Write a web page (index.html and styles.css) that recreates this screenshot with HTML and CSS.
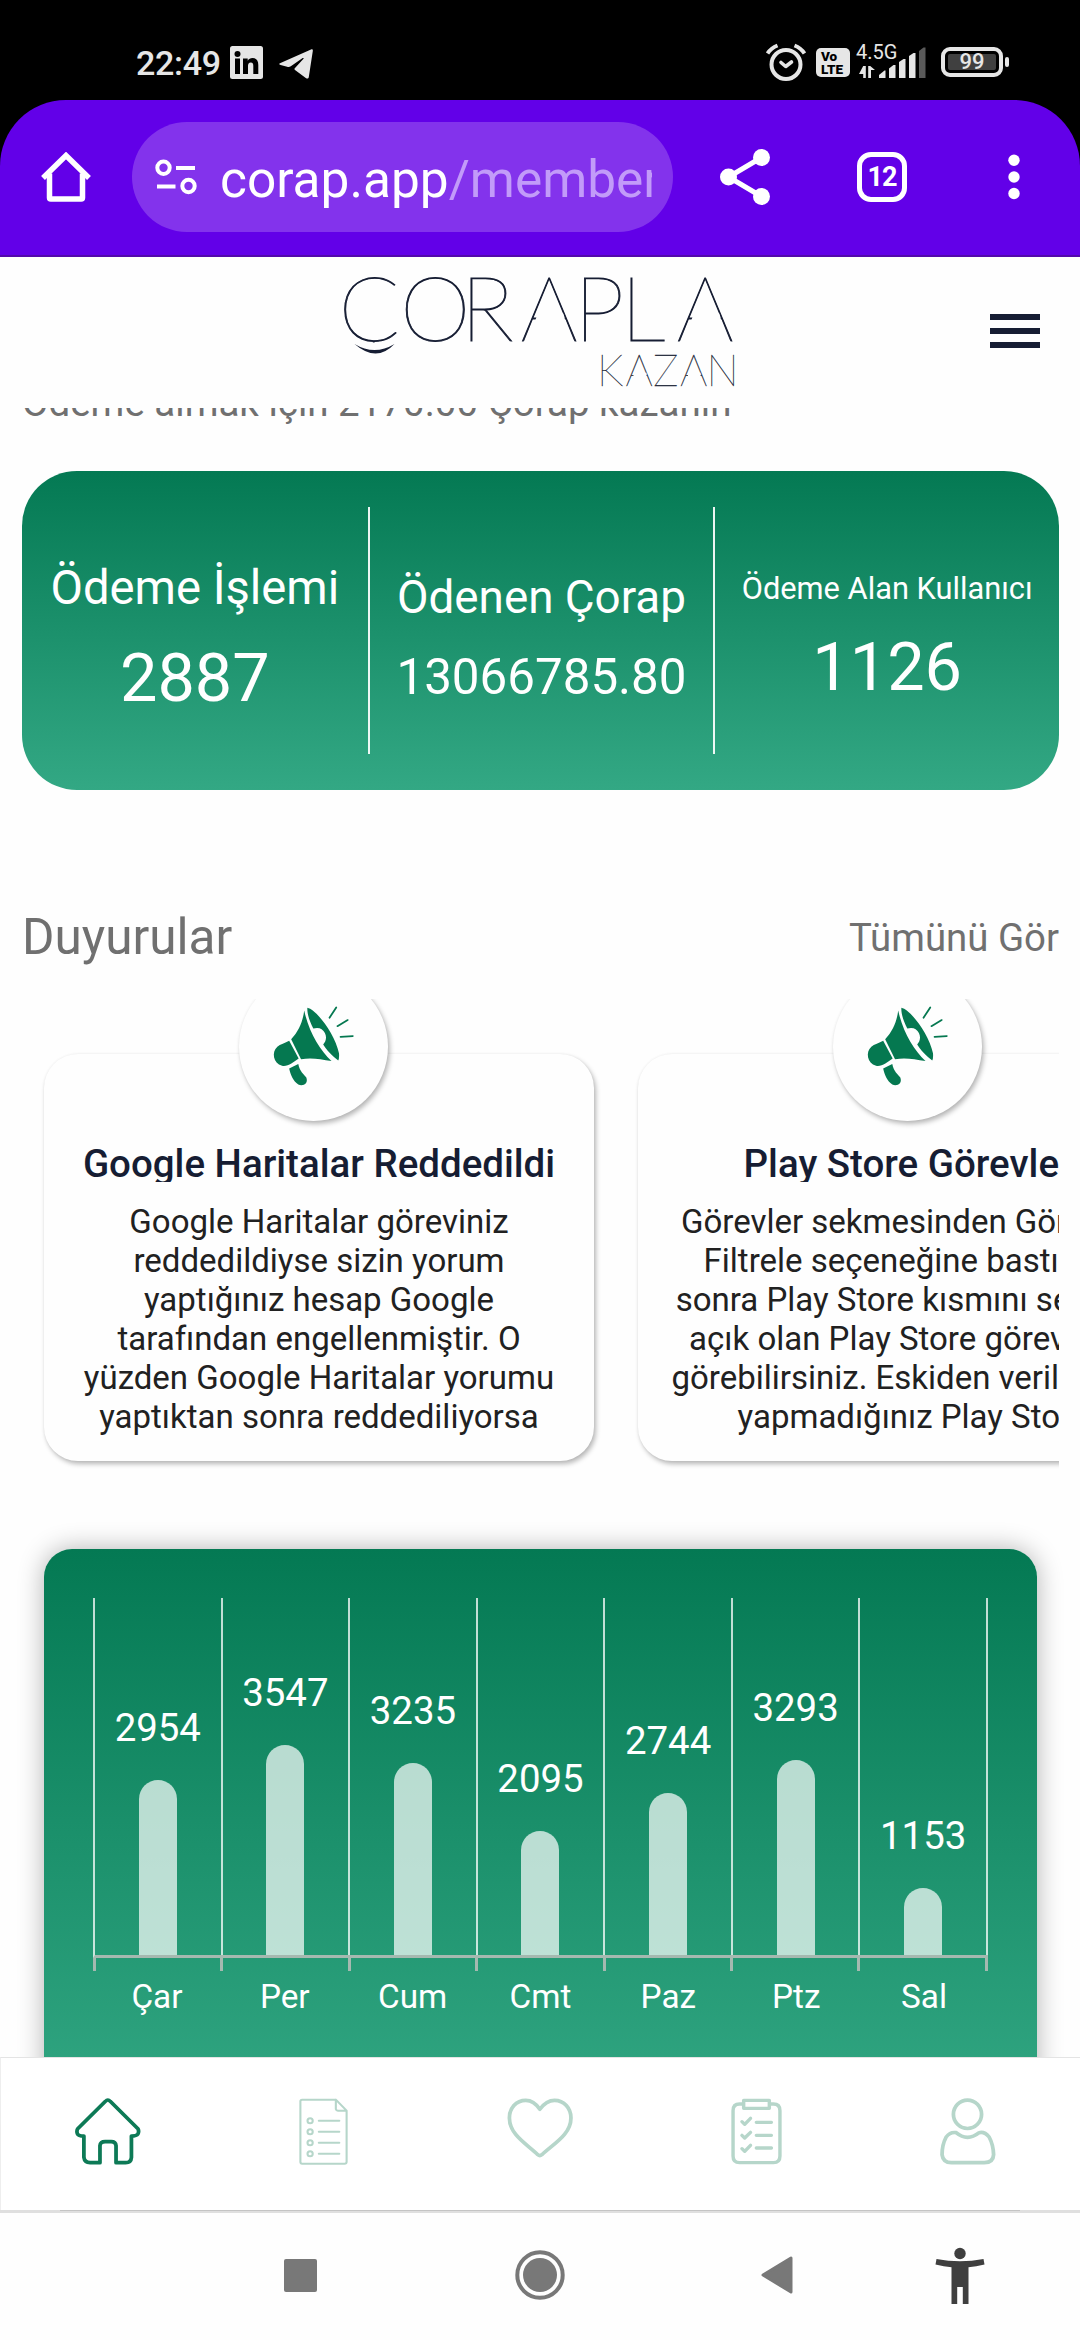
FILE: index.html
```html
<!DOCTYPE html>
<html lang="tr">
<head>
<meta charset="utf-8">
<title>Çorapla Kazan</title>
<link rel="stylesheet" href="styles.css">
</head>
<body>
<div class="phone">
  <div class="status">
    <span class="clock">22:49</span>
    <svg class="s-linkedin" width="33" height="33" viewBox="0 0 33 33"><rect width="33" height="33" rx="2.500" fill="#e6e6e6"/><g fill="#000"><circle cx="7.500" cy="8" r="3"/><rect x="5" y="12.500" width="5" height="15.500"/><path d="M13 12.500h4.700v2.200c1-1.700 2.700-2.600 4.800-2.600 4.200 0 5.800 2.500 5.800 7V28h-5v-8c0-2.200-.5-3.600-2.500-3.600-2.100 0-2.800 1.500-2.800 3.600v8H13z"/></g></svg>
    <svg class="s-telegram" width="34" height="30" viewBox="0 0 34 30"><path fill="#e6e6e6" d="M1.500 14 32 .4c1.300-.5 2 .2 1.800 1.500L29.800 28c-.3 1.600-1.400 2-2.700 1.200L16 21c-.8-.7-.7-1.400 0-2.100l8.500-9.200c.4-.6-.2-1-.8-.6L11.800 17.300c-1.200.8-2.300.9-3.700.5L1.600 16C-.3 15.400-.2 14.800 1.500 14z"/></svg>
    <div class="status-right">
      <svg class="s-alarm" width="40" height="38" viewBox="0 0 40 38"><g fill="none" stroke="#e6e6e6" stroke-linecap="round"><circle cx="20" cy="21.500" r="14.500" stroke-width="4"/><path stroke-width="3.600" stroke-linejoin="round" d="M15 19.500l4.700 4 5.800-4.500"/><path stroke-width="4" stroke-linecap="butt" d="M1.500 10.500 Q5 5 11.500 2.500M38.500 10.500 Q35 5 28.500 2.500"/></g></svg>
      <div class="volte"><span>Vo</span><span>LTE</span></div>
      <div class="net"><span>4.5G</span>
        <svg width="16" height="12" viewBox="0 0 16 12"><g fill="#e6e6e6"><path d="M4.200 0h2.600v12H4.200V8H0z"/><path d="M9.200 12H12V4h4L11.200 0h-2z"/></g></svg>
      </div>
      <svg class="s-signal" width="50" height="32" viewBox="0 0 50 32"><g fill="#e6e6e6"><path d="M1 28l5.500-4.500h1V31H1z"/><path d="M11 21.500l4.500-3.500h2v13H11z"/><path d="M21 15l4.500-3h2v19H21z"/><path d="M31 9l4.500-3h2v25H31z"/><path fill="#5a5a5a" d="M41 4l4.500-3.500h2V31H41z"/></g></svg>
      <div class="battery"><span>99</span></div><i class="nub"></i>
    </div>
  </div>

  <div class="toolbar-wrap"><div class="toolbar">
    <svg class="t-home" width="50" height="50" viewBox="0 0 50 50"><path fill="none" stroke="#fff" stroke-width="5.500" stroke-linejoin="round" d="M8.500 21.500v24.200q0 1.300 1.300 1.300h30.400q1.300 0 1.300-1.300V21.500"/><path fill="none" stroke="#fff" stroke-width="5.500" d="M2 26 25 3.500 48 26"/></svg>
    <div class="url">
      <svg width="42" height="36" viewBox="0 0 42 36"><g fill="none" stroke="#fff" stroke-width="4"><circle cx="8.500" cy="8.800" r="6.200"/><path d="M21 9h19M2 27.500h18.500"/><circle cx="33.500" cy="27" r="6.200"/></g></svg>
      <div class="address">corap.app<span>/member</span></div>
    </div>
    <svg class="t-share" width="50" height="56" viewBox="0 0 50 56"><path fill="none" stroke="#fff" stroke-width="5" d="M41.500 8.500 8.500 28l33 19.500"/><g fill="#fff"><circle cx="8.500" cy="28" r="8.500"/><circle cx="41.500" cy="8.500" r="8.500"/><circle cx="41.500" cy="47.500" r="8.500"/></g></svg>
    <div class="tabs">12</div>
    <svg class="t-dots" width="12" height="46" viewBox="0 0 12 46"><g fill="#fff"><circle cx="6" cy="6.300" r="5.700"/><circle cx="6" cy="23" r="5.700"/><circle cx="6" cy="39.500" r="5.700"/></g></svg>
  </div></div>

  <header class="site-head">
    <svg class="logo" width="400" height="116" viewBox="340 272 400 116" role="img">
      <g class="logo-main"><text y="340.500" x="338.500 400 460.500 520.500 574 620.500 676.500">ÇORAPLA</text></g>
      <rect x="340" y="342.500" width="60" height="24" fill="#fefefe"/>
      <path fill="#fefefe" d="M538 313H563L565.500 321H535zM694 313H719L721.500 321H691z"/>
      <path fill="#161d33" d="M354.500 344q20 12 40 0q-18 19-40 0z"/>
      <g class="logo-sub"><text y="385.500" x="597 625.500 653 680 706.500">KAZAN</text></g>
      <g stroke="#fefefe" stroke-width="4.500"><path d="M633.500 375h13M688 375h12.500"/></g>
    </svg>
    <div class="burger"><i></i><i></i><i></i></div>
  </header>

  <main class="content">
    <div class="notice"><p>Ödeme almak için 2170.00 Çorap kazanın</p></div>
    <section class="stats">
      <div class="stat stat-a"><span>Ödeme İşlemi</span><b>2887</b></div>
      <div class="stat stat-b"><span>Ödenen Çorap</span><b>13066785.80</b></div>
      <div class="stat stat-c"><span>Ödeme Alan Kullanıcı</span><b>1126</b></div>
    </section>

    <div class="section-head"><h2>Duyurular</h2><a>Tümünü Gör</a></div>

    <svg width="0" height="0" class="defs"><symbol id="mega" viewBox="685 325 215 220" preserveAspectRatio="none">
      <path fill="#057850" d="M769 342C766 368 756 396 736 417L761 470C786 464 810 470 838 474C808 446 780 396 769 342z"/>
      <path fill="#057850" d="M777 335C800 340 846 402 857 454Q858 468 855 473C846 464 832 456 817 431C828 420 826 400 813 391Q806 386 792 389C782 369 776 350 777 335z"/>
      <path fill="#057850" d="M731 421L755 468C742 478 727 490 713 487C690 481 686 450 701 437C708 430 721 427 731 421z"/>
      <path fill="#057850" d="M731 494Q744 487 754 482C758 503 768 508 774 517C781 534 765 542 754 536C741 527 734 509 731 494z"/>
      <path fill="none" stroke="#057850" stroke-width="4.500" stroke-linecap="round" d="M833 361L850 334M853 383L879 367M861 411L892 409"/>
    </symbol></svg>

    <section class="carousel">
      <article class="news">
        <div class="badge"><svg width="85" height="84"><use href="#mega"/></svg></div>
        <h3>Google Haritalar Reddedildi</h3>
        <p>Google Haritalar göreviniz<br>reddedildiyse sizin yorum<br>yaptığınız hesap Google<br>tarafından engellenmiştir. O<br>yüzden Google Haritalar yorumu<br>yaptıktan sonra reddediliyorsa</p>
      </article>
      <article class="news">
        <div class="badge"><svg width="85" height="84"><use href="#mega"/></svg></div>
        <h3>Play Store Görevleri</h3>
        <p>Görevler sekmesinden Görevleri<br>Filtrele seçeneğine bastıktan<br>sonra Play Store kısmını seçerek<br>açık olan Play Store görevlerini<br>görebilirsiniz. Eskiden verilmiş ve<br>yapmadığınız Play Store</p>
      </article>
    </section>

    <section class="chart-card">
      <div class="plot">
        <div class="col"><span>2954</span><i style="height:175px"></i></div>
        <div class="col"><span>3547</span><i style="height:210px"></i></div>
        <div class="col"><span>3235</span><i style="height:192px"></i></div>
        <div class="col"><span>2095</span><i style="height:124px"></i></div>
        <div class="col"><span>2744</span><i style="height:162px"></i></div>
        <div class="col"><span>3293</span><i style="height:195px"></i></div>
        <div class="col"><span>1153</span><i style="height:67px"></i></div>
      </div>
      <div class="days"><span>Çar</span><span>Per</span><span>Cum</span><span>Cmt</span><span>Paz</span><span>Ptz</span><span>Sal</span></div>
    </section>
  </main>

  <nav class="tabbar">
    <svg width="66" height="67" viewBox="218 172 193 201" preserveAspectRatio="none"><path fill="none" stroke="#0d7a56" stroke-width="11" stroke-linejoin="round" d="M307 182Q314 174 321 182L402 264Q406 272 402 280Q398 286 383 286V350Q382 366 366 366H338V315Q337 303 324 303H306Q292 303 291 315V366H262Q246 366 244 350V286Q228 286 225 279Q222 271 226 264z"/></svg>
    <svg width="49" height="67" viewBox="871 172 141 201" preserveAspectRatio="none"><g fill="none" stroke="#b6d6ca" stroke-width="6" stroke-linejoin="round"><path d="M977 177H880Q875 177 875 182V363Q875 369 880 369H1002Q1008 369 1008 363V210L977 177V205Q978 210 983 210H1008"/><path stroke-linecap="round" d="M928 240H987M928 273H987M928 306H987M928 339H987"/><circle cx="903" cy="240" r="7.500"/><circle cx="903" cy="273" r="7.500"/><circle cx="903" cy="306" r="7.500"/><circle cx="903" cy="339" r="7.500"/></g></svg>
    <svg width="66" height="60" viewBox="1472 172 193 181" preserveAspectRatio="none"><path fill="none" stroke="#b6d6ca" stroke-width="11" stroke-linejoin="round" d="M1568 206C1557 189 1543 179 1527 179C1498 179 1479 203 1479 232C1479 283 1530 311 1562 343Q1568 348 1574 343C1606 311 1659 283 1659 232C1659 203 1639 179 1611 179C1594 179 1580 189 1568 206z"/></svg>
    <svg width="51" height="67" viewBox="555 172 149 201" preserveAspectRatio="none"><g fill="none" stroke="#b6d6ca" stroke-width="10" stroke-linejoin="round"><path d="M592 190H580Q561 190 561 210V346Q561 366 580 366H679Q698 366 698 346V210Q698 190 679 190H667"/><path d="M592 179H667V203H592z"/><g stroke-linecap="round"><path d="M629 245H673M629 284H673M629 322H673"/><path d="M587 243L595 251L612 233M587 284L595 292L612 275M587 324L595 332L612 314"/></g></g></svg>
    <svg width="56" height="67" viewBox="1160 172 163 201" preserveAspectRatio="none"><g fill="none" stroke="#b6d6ca" stroke-width="11" stroke-linejoin="round"><ellipse cx="1240" cy="221" rx="41" ry="42.500"/><path d="M1207 276Q1223 290 1240 290Q1257 290 1274 276Q1290 272 1303 289Q1315 312 1316 342Q1315 366 1289 366H1193Q1169 366 1166 342Q1166 312 1178 289Q1190 273 1207 276z"/></g></svg>
  </nav>
  <div class="sysline"></div>
  <div class="sysnav">
    <i class="recent"></i>
    <svg class="circle" width="50" height="50" viewBox="0 0 50 50"><circle cx="25" cy="25" r="22.700" fill="none" stroke="#787878" stroke-width="4"/><circle cx="25" cy="25" r="17" fill="#787878"/></svg>
    <svg class="back" width="32" height="38" viewBox="0 0 32 38"><path fill="#787878" stroke="#787878" stroke-width="3" stroke-linejoin="round" d="M2 19 30 2v34z"/></svg>
    <svg class="access" width="50" height="58" viewBox="0 0 50 58"><g fill="#3f3f3f"><circle cx="25" cy="6.500" r="5.700"/><path d="M1.500 12Q25 16.500 48.500 12L49.500 17.500Q41 19.800 33.500 20.300V57H27.800V40H22.200V57H16.500V20.300Q9 19.800.5 17.500z"/></g></svg>
  </div>
</div>
</body>
</html>
```
FILE: styles.css
```css
* { box-sizing: border-box; }
body { margin: 0; background: #fefefe; font-family: Roboto, "Liberation Sans", sans-serif; }
i { display: block; }
svg { display: block; flex: none; }
.phone { width: 1080px; height: 2340px; overflow: hidden; display: flex; flex-direction: column; background: #fefefe; }

/* status bar */
.status { height: 100px; flex: none; background: #000; color: #e6e6e6; display: flex; align-items: flex-start; padding-left: 136px; }
.clock { width: 94px; padding-top: 43px; font-size: 34px; line-height: 40px; font-weight: 500; letter-spacing: -0.3px; }
.s-linkedin { margin-top: 46px; }
.s-telegram { margin: 49px 0 0 16px; }
.status-right { margin-left: auto; padding-right: 71px; display: flex; align-items: flex-start; }
.s-alarm { margin-top: 43px; }
.volte { margin: 48px 0 0 10px; width: 34px; height: 29px; border-radius: 5px; background: #e6e6e6; color: #000; padding: 2px 0 0 5px; font-size: 13.5px; line-height: 12.5px; font-weight: 900; }
.volte span { display: block; }
.net { width: 40px; margin: 40px 0 0 6px; font-size: 20px; line-height: 24px; }
.net span { display: block; white-space: nowrap; }
.net svg { margin: 2px 0 0 3px; }
.s-signal { margin: 47px 0 0 -18px; }
.battery { margin: 47px 0 0 13px; width: 62px; height: 30px; border: 4px solid #e6e6e6; border-radius: 9px; background: #404040; background-clip: content-box; padding: 3px; display: flex; justify-content: center; align-items: center; font-size: 22px; font-weight: 500; line-height: 16px; }
.nub { margin: 57px 0 0 2px; width: 4px; height: 10px; border-radius: 2px; background: #e6e6e6; }

/* browser toolbar */
.toolbar-wrap { background: #000; flex: none; }
.toolbar { height: 157px; background: #6200e8; border-bottom: 2px solid #5208ac; border-radius: 66px 66px 0 0; display: flex; align-items: flex-start; padding-left: 41px; }
.t-home { margin-top: 52px; }
.url { margin: 22px 0 0 41px; width: 541px; height: 110px; border-radius: 55px; background: #8333ec; display: flex; align-items: flex-start; padding-left: 23px; }
.url svg { margin-top: 37px; }
.address { margin: 26px 0 0 23px; width: 432px; overflow: hidden; white-space: nowrap; color: #fff; font-size: 51.4px; line-height: 64px; }
.address span { color: #c29bf9; }
.t-share { margin: 49px 0 0 47px; }
.tabs { margin: 52px 0 0 87px; width: 50px; height: 50px; border: 5.5px solid #fff; border-radius: 14px; color: #fff; font-size: 27px; font-weight: 700; line-height: 41px; text-align: center; letter-spacing: -1px; }
.t-dots { margin: 54px 0 0 101px; }

/* site header */
.site-head { height: 151px; flex: none; display: flex; align-items: flex-start; padding: 15px 40px 0 340px; justify-content: space-between; }
.logo text { font-family: Lato, Roboto, sans-serif; font-weight: 100; fill: #161d33; stroke: #161d33; }
.logo-main text { font-size: 90px; stroke-width: 0.9px; }
.logo-sub text { font-size: 43px; stroke-width: 0.3px; }
.burger { width: 50px; padding-top: 42px; display: grid; gap: 8.5px; }
.burger i { height: 5.5px; background: #161d33; }

/* page */
.content { height: 1649px; flex: none; overflow: hidden; padding: 0 21px 0 22px; }
.notice { height: 63px; overflow: hidden; }
.notice p { margin: -29px 0 0; font-size: 38.5px; line-height: 47px; color: #707070; white-space: nowrap; }
.stats { height: 319px; border-radius: 55px; background: linear-gradient(#047953, #33a884); padding: 36px 0; display: grid; grid-template-columns: repeat(3, 1fr); color: #fff; }
.stat { text-align: center; white-space: nowrap; }
.stat + .stat { border-left: 2.5px solid rgba(255,255,255,.92); }
.stat span, .stat b { display: block; font-weight: 400; }
.stat b { font-size: 66.6px; line-height: 80px; }
.stat-a { padding-top: 51px; }
.stat-a span { font-size: 47.2px; line-height: 60px; margin-bottom: 20px; }
.stat-b { padding-top: 61px; }
.stat-b span { font-size: 45.8px; line-height: 60px; margin-bottom: 19px; }
.stat-b b { font-size: 49.3px; line-height: 60px; }
.stat-c { padding-top: 62px; }
.stat-c span { font-size: 30.8px; line-height: 40px; margin-bottom: 18px; }

.section-head { margin-top: 117px; height: 60px; display: flex; justify-content: space-between; color: #707070; }
.section-head h2 { margin: 0; font-size: 49.5px; line-height: 60px; font-weight: 400; }
.section-head a { font-size: 38.4px; line-height: 62px; }

.defs { position: absolute; }
.carousel { margin-top: 32px; height: 490px; overflow: hidden; padding: 55px 0 0 22px; display: flex; gap: 44px; }
.news { flex: none; width: 550px; height: 407px; border-radius: 34px; background: #fefefe; box-shadow: 2px 3px 5px rgba(0,0,0,.28), 0 0 3px rgba(0,0,0,.05); display: flex; flex-direction: column; align-items: center; text-align: center; }
.badge { flex: none; margin: -82px 11px 0 0; width: 149px; height: 149px; border-radius: 50%; background: #fefefe; box-shadow: 2px 3px 5px rgba(0,0,0,.28), 0 0 3px rgba(0,0,0,.05); padding: 32px 0 0 32px; }
.news h3 { margin: 20px 0 0; height: 41px; overflow: hidden; font-size: 38.5px; line-height: 46px; font-weight: 500; color: #161d33; white-space: nowrap; }
.news p { margin: 20px 0 0; font-size: 33px; line-height: 39px; color: #212121; white-space: nowrap; }

.chart-card { margin: 60px 22px 0; height: 580px; border-radius: 28px; background: linear-gradient(#047953, #33a884); box-shadow: 0 0 26px rgba(0,0,0,.3); padding: 49px 49px 0; color: #fff; }
.plot { height: 360px; width: 895px; display: grid; grid-template-columns: repeat(7, 1fr); border-bottom: 3px solid #a5b9b0; border-left: 2px solid rgba(255,255,255,.75); }
.col { border-right: 2px solid rgba(255,255,255,.75); display: flex; flex-direction: column; align-items: center; justify-content: flex-end; font-size: 38.4px; line-height: 46px; }
.col span { margin-bottom: 29px; }
.col i { width: 38px; border-radius: 19px 19px 0 0; background: rgba(255,255,255,.7); }
.days { width: 895px; display: grid; grid-template-columns: repeat(7, 1fr); text-align: center; font-size: 33.3px; line-height: 40px; padding-top: 19px; position: relative; }
.days::before { content: ""; position: absolute; left: 0; top: 0; width: 895px; height: 13px; background: repeating-linear-gradient(90deg, #a5b9b0 0 3px, transparent 3px 127.4px); }

/* bottom navigation */
.tabbar { height: 153px; flex: none; border-top: 1px solid #e4e4e4; border-left: 1px solid #eee; background: #fff; display: flex; justify-content: space-between; align-items: flex-start; padding: 40px 84px 0 74px; }
.sysline { height: 3px; flex: none; background: linear-gradient(#c4c4c4, #c4c4c4) 60px 0 / 960px 1px no-repeat #dfdfdf; }
.sysnav { flex: 1; display: flex; align-items: flex-start; padding-left: 284px; }
.recent { margin-top: 46px; width: 32.5px; height: 32.5px; border-radius: 2px; background: #787878; }
.circle { margin: 37px 0 0 198.5px; }
.back { margin: 43px 0 0 196px; }
.access { margin: 34px 0 0 142px; }
```
